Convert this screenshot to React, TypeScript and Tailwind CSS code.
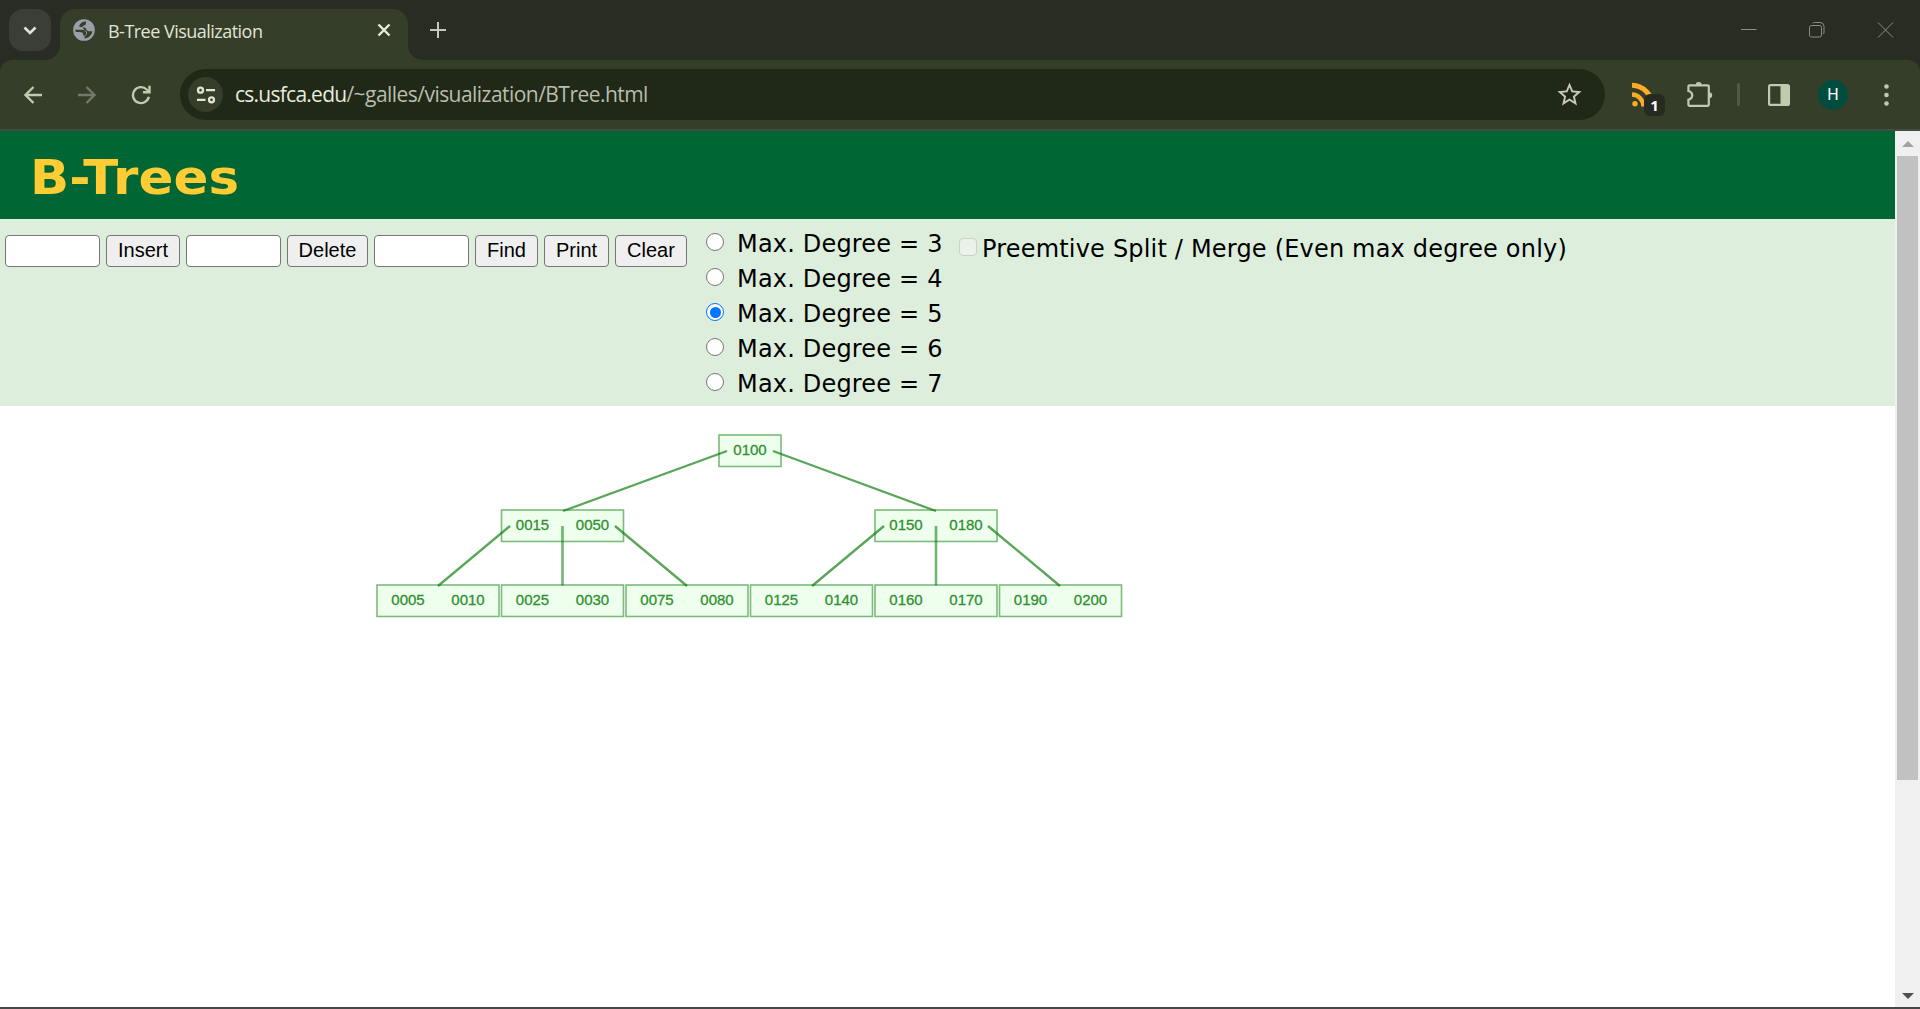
import type { ReactNode } from "react";

const uiFont = "font-['Open_Sans','Noto_Sans',sans-serif]";
const arial = "font-['Liberation_Sans',Arial,sans-serif]";
const verdana = "font-['DejaVu_Sans',Verdana,sans-serif]";

function TabStrip() {
  return (
    <div className="relative flex h-[60px] shrink-0 items-start bg-[#282c23]">
      <div className="mt-[9px] ml-[9px] flex size-[42px] items-center justify-center rounded-[14px] bg-[#3b3d37]">
        <svg width="14" height="9" viewBox="0 0 14 9" fill="none" stroke="#e3e3d8" strokeWidth="2.6">
          <path d="M1.5 1.5 7 7l5.5-5.5" />
        </svg>
      </div>
      <div className="relative mt-[9px] ml-[9px] flex h-[51px] w-[348px] rounded-t-[15px] bg-[#343e29] pb-[9px]">
        <svg className="absolute bottom-0 -left-[15px]" width="15" height="15" viewBox="0 0 15 15" fill="#343e29">
          <path d="M15 0v15H0A15 15 0 0 0 15 0Z" />
        </svg>
        <svg className="absolute -right-[15px] bottom-0" width="15" height="15" viewBox="0 0 15 15" fill="#343e29">
          <path d="M0 0v15h15A15 15 0 0 1 0 0Z" />
        </svg>
        <svg className="mt-2 ml-[11px] shrink-0" width="26" height="26" viewBox="0 0 24 24">
          <circle cx="12" cy="12" r="10" fill="#9aa0aa" />
          <path
            d="M14 4.200C10.500 4 8 6.200 7.500 8.700c1.800.9 3.800.4 5.300 1 1.400.7 1.200 2.500 2.700 3.200 1.300.5 2.500.3 4.300.3-.6 3.600-3.600 6.500-7.300 6.700v-2.200c1.800-.6 2.400-2 2.300-3.200-.2-1.800-2-2.700-4-2.700-2.300 0-4.500.2-6.700-.2 0 .5-.1 1.300.1 1.900 2 .7 4.600 0 6.300.8.900.6.300 1.800.9 2.600.6.700 1.300.5 1.900 0 1.300-1.100 1-3.300-.7-4.300L10.500 8.200c1.300-.4 2.600-.6 3.200-1.600.4-.8-.3-1.400.3-2.400Z"
            fill="#343e29"
          />
        </svg>
        <span className={`${uiFont} mt-[9px] ml-[11px] text-[18px] leading-[26px] tracking-[-0.52px] whitespace-nowrap text-[#e1e4d5]`}>
          B-Tree Visualization
        </span>
        <svg className="mt-[14px] mr-[17px] ml-auto" width="14" height="14" viewBox="0 0 14 14" stroke="#e8eada" strokeWidth="2.4">
          <path d="M1.5 1.5l11 11M12.500 1.500l-11 11" />
        </svg>
      </div>
      <svg className="mt-[22px] ml-[22px]" width="16" height="16" viewBox="0 0 16 16" stroke="#c6c8ba" strokeWidth="2">
        <path d="M8 0v16M0 8h16" />
      </svg>
      <div className="mt-[22px] mr-[26px] ml-auto flex h-4 items-center gap-[52px]">
        <svg width="16" height="16" viewBox="0 0 16 16" stroke="#8c8e83" fill="none">
          <path d="M0 7.500h15.500" />
        </svg>
        <svg width="16" height="16" viewBox="0 0 16 16" stroke="#8c8e83" fill="none">
          <rect x="0.500" y="3.500" width="12" height="11.500" rx="2" />
          <path d="M3.500 1Q4.500.5 5.500.5h5.500a4 4 0 0 1 4 4v5.500q0 1.500-.8 2.200" />
        </svg>
        <svg width="17" height="16" viewBox="0 0 17 16" stroke="#8c8e83" fill="none">
          <path d="M1 0.500l15 15M16 .5l-15 15" />
        </svg>
      </div>
    </div>
  );
}

function Toolbar() {
  return (
    <div className="shrink-0 bg-[#282c23]">
      <div className="flex h-[69px] items-center rounded-t-[12px] bg-[#343e29]">
        <svg className="ml-[24px]" width="18" height="18" viewBox="0 0 18 18" fill="none" stroke="#bfcbae" strokeWidth="2.400">
          <path d="M18 9H2M9.500 1 1.500 9l8 8" />
        </svg>
        <svg className="ml-[36px]" width="18" height="18" viewBox="0 0 18 18" fill="none" stroke="#73796a" strokeWidth="2.400">
          <path d="M0 9h16M8.500 1l8 8-8 8" />
        </svg>
        <svg className="ml-[35px]" width="20" height="20" viewBox="0 0 20 20" fill="none" stroke="#bfcbae" strokeWidth="2.400">
          <path d="M17.800 11.800A8 8 0 1 1 15.700 4.500L18.300 7" />
          <path d="M12 7.300h6.500V.8" />
        </svg>
        <div className="ml-[29px] flex h-[51px] w-[1425px] items-center rounded-full bg-[#202817] pl-[8px]">
          <div className="flex size-[35px] items-center justify-center rounded-full bg-[#343e29]">
            <svg width="20" height="18" viewBox="0 0 20 18" fill="none" stroke="#e3e3d8" strokeWidth="2.300">
              <circle cx="4.500" cy="4.200" r="2.500" />
              <path d="M10 4.200h9M1 13.800h8.500" />
              <circle cx="15.500" cy="13.800" r="2.500" />
            </svg>
          </div>
          <span className={`${uiFont} mb-px ml-[12px] text-[21px] leading-[30px] tracking-[-0.54px] whitespace-nowrap text-[#b9bdab]`}>
            <span className="tracking-[-0.74px] text-[#e8ebdc]">cs.usfca.edu</span>/~galles/visualization/BTree.html
          </span>
          <svg className="mr-[21px] ml-auto" width="29" height="29" viewBox="0 0 24 24" fill="#c6c8ba">
            <path d="M22 9.240l-7.190-.62L12 2 9.190 8.630 2 9.240l5.460 4.730L5.820 21 12 17.270 18.180 21l-1.630-7.030L22 9.240zM12 15.400l-3.760 2.270 1-4.280-3.320-2.880 4.380-.38L12 6.100l1.710 4.040 4.380.38-3.320 2.880 1 4.280L12 15.400z" />
          </svg>
        </div>
        <div className="relative ml-[27px] h-[25px] w-[24px]">
          <svg width="24" height="25" viewBox="0 0 24 25" fill="none" stroke="#ffab24" strokeWidth="5">
            <circle cx="3" cy="21.800" r="2.700" fill="#ffab24" stroke="none" />
            <path d="M0 12.500A12 12 0 0 1 11.500 24.500" strokeWidth="4.400" />
            <path d="M0 3.300A21 21 0 0 1 20.500 24.500" strokeWidth="5" />
          </svg>
          <div className={`${uiFont} absolute top-[12px] left-[12px] flex h-[22px] w-[21px] items-center justify-center rounded-[6px] bg-[#262a21] text-[15px] font-bold text-white`}>
            1
          </div>
        </div>
        <svg className="ml-[30px]" width="28" height="28" viewBox="0 0 28 28" fill="none" stroke="#bfcbae" strokeWidth="2.200">
          <path d="M3.400 4.400H21.800a1 1 0 0 1 1 1V23.800a1 1 0 0 1-1 1H3.400a1 1 0 0 1-1-1V18.700C7.500 17.500 7.500 11.200 2.400 10V5.400a1 1 0 0 1 1-1Z" />
          <path d="M9.700 4.200a3 3.200 0 0 1 6 0ZM23 11.300a3.200 3 0 0 1 0 6Z" fill="#bfcbae" stroke="none" />
        </svg>
        <div className="ml-[23px] h-[23px] w-[3px] rounded-full bg-[#505a44]" />
        <svg className="ml-[28px]" width="22" height="22" viewBox="0 0 22 22" fill="none">
          <rect x="1.100" y="1.100" width="19.800" height="19.800" rx="1.500" stroke="#bfcbae" strokeWidth="2.200" />
          <path d="M12.500 1H21v20h-8.500Z" fill="#bfcbae" />
        </svg>
        <div className="ml-[28px] flex size-[30px] items-center justify-center rounded-full bg-[#004d40] font-[Roboto,sans-serif] text-[16px] text-white">
          H
        </div>
        <svg className="ml-[36px]" width="5" height="22" viewBox="0 0 5 22" fill="#bfcbae">
          <circle cx="2.500" cy="2.500" r="2.300" />
          <circle cx="2.500" cy="11" r="2.300" />
          <circle cx="2.500" cy="19.500" r="2.300" />
        </svg>
      </div>
      <div className="h-[2px] bg-[#474a41]" />
    </div>
  );
}

function Field() {
  return <input className="h-[32px] w-[95px] rounded-[4px] border border-[#767676] bg-white" />;
}

function Button({ className, children }: { className: string; children: ReactNode }) {
  return (
    <button className={`${arial} h-[32px] rounded-[4px] border border-[#767676] bg-[#efefef] pb-[2px] text-[20px] leading-[28px] text-black ${className}`}>
      {children}
    </button>
  );
}

function Controls() {
  return (
    <div className={`${verdana} flex h-[187px] shrink-0 items-start bg-[#ddeedd] text-[24px] text-black`}>
      <div className="mt-[16px] ml-[5px] flex gap-[6px]">
        <Field />
        <Button className="w-[74px]">Insert</Button>
        <Field />
        <Button className="w-[81px]">Delete</Button>
        <Field />
        <Button className="w-[63px]">Find</Button>
        <Button className="w-[65px]">Print</Button>
        <Button className="w-[72px]">Clear</Button>
      </div>
      <div className="mt-[7px] ml-[19px] flex flex-col">
        {[3, 4, 5, 6, 7].map((n) => (
          <label key={n} className="flex h-[35px] items-start">
            <span
              className={`mt-[7px] flex size-[18px] items-center justify-center rounded-full border-[1.500px] bg-white ${n === 5 ? "border-[#0075ff]" : "border-[#767676]"}`}
            >
              {n === 5 && <span className="size-[11px] rounded-full bg-[#0075ff]" />}
            </span>
            <span className="ml-[13px] w-[204px] pt-px leading-[35px] tracking-[0.18px] whitespace-nowrap">Max. Degree = {n}</span>
          </label>
        ))}
      </div>
      <label className="mt-[12px] ml-[18px] flex h-[35px] items-start">
        <span className="mt-[7px] size-[18px] rounded-[4px] border-[1.500px] border-[#cbd0cb] bg-[#eaf2ea]" />
        <span className="ml-[5px] pt-px leading-[35px] tracking-[0.19px] whitespace-nowrap">
          Preemtive Split / Merge (Even max degree only)
        </span>
      </label>
    </div>
  );
}

type TreeNode = { x: number; y: number; keys: string[] };

const nodes: TreeNode[] = [
  { x: 719, y: 435, keys: ["0100"] },
  { x: 501.5, y: 510, keys: ["0015", "0050"] },
  { x: 875, y: 510, keys: ["0150", "0180"] },
  { x: 377, y: 585, keys: ["0005", "0010"] },
  { x: 501.5, y: 585, keys: ["0025", "0030"] },
  { x: 626, y: 585, keys: ["0075", "0080"] },
  { x: 750.5, y: 585, keys: ["0125", "0140"] },
  { x: 875, y: 585, keys: ["0160", "0170"] },
  { x: 999.5, y: 585, keys: ["0190", "0200"] },
];

const edges = [
  [727, 451, 563, 511],
  [773, 451, 936, 511],
  [510, 526, 438, 586],
  [615, 526, 687, 586],
  [884, 526, 812, 586],
  [988, 526, 1060, 586],
];

function Tree() {
  return (
    <svg width="1895" height="601" viewBox="0 406 1895 601" className={arial}>
      {nodes.map((n) => (
        <rect
          key={n.keys[0]}
          x={n.x}
          y={n.y}
          width={n.keys.length === 1 ? 62 : 122}
          height={31.5}
          fill="#eeffee"
          stroke="#007700"
          strokeOpacity={0.5}
          strokeWidth={1.6}
        />
      ))}
      {edges.map((e) => (
        <line key={e.join()} x1={e[0]} y1={e[1]} x2={e[2]} y2={e[3]} stroke="#007700" strokeOpacity={0.65} strokeWidth={2.3} />
      ))}
      {[562.5, 936].map((x) => (
        <line key={x} x1={x} y1={526} x2={x} y2={585.5} stroke="#007700" strokeOpacity={0.55} strokeWidth={2.6} />
      ))}
      {nodes.map((n) =>
        n.keys.map((k, i) => (
          <text key={k} x={n.x + 31 + i * 60} y={n.y + 20.3} textAnchor="middle" fontSize="15" fill="#318f31" stroke="#318f31" strokeWidth="0.3">
            {k}
          </text>
        )),
      )}
    </svg>
  );
}

function Scrollbar() {
  return (
    <div className="flex w-[25px] shrink-0 flex-col items-center bg-[#f0f0f0]">
      <svg className="mt-[10px]" width="12" height="6" viewBox="0 0 12 6" fill="#a3a3a3">
        <path d="M6 0l6 6H0Z" />
      </svg>
      <div className="mt-[9px] h-[624px] w-[21px] bg-[#c1c1c1]" />
      <svg className="mt-auto mb-[8px]" width="12" height="6" viewBox="0 0 12 6" fill="#505050">
        <path d="M0 0h12L6 6Z" />
      </svg>
    </div>
  );
}

export default function App() {
  return (
    <div className="flex h-[1009px] w-[1920px] flex-col overflow-hidden bg-white">
      <TabStrip />
      <Toolbar />
      <div className="flex h-[876px] shrink-0">
        <main className="flex w-[1895px] flex-col">
          <h1 className={`${verdana} h-[88px] shrink-0 bg-[#006633] pl-[30px] text-[48px] leading-[92px] font-bold text-[#ffcc33]`}>
            <span className="inline-block origin-left scale-x-[1.07] tracking-[0.200px]">B-Trees</span>
          </h1>
          <Controls />
          <Tree />
        </main>
        <Scrollbar />
      </div>
      <div className="h-[2px] bg-[#474747]" />
    </div>
  );
}
